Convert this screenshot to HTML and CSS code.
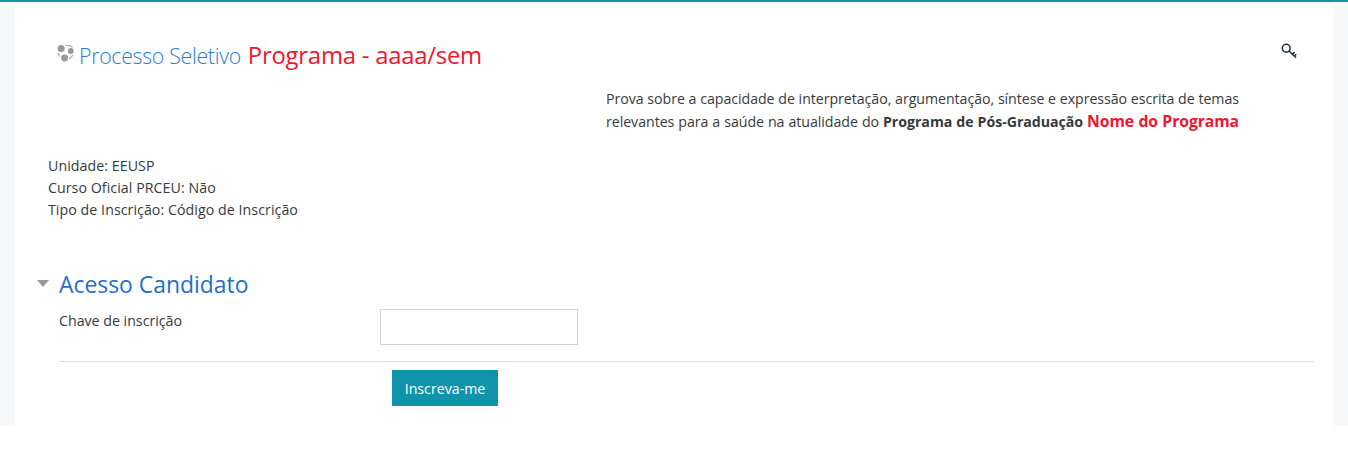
FILE: index.html
```html
<!DOCTYPE html>
<html lang="pt">
<head>
<meta charset="utf-8">
<title>Processo Seletivo</title>
<link rel="stylesheet" href="styles.css">
</head>
<body>
<div class="band">
  <main class="card">
    <header class="head">
      <h2 class="title">
        <svg class="logo" viewBox="0 0 18 18" aria-hidden="true"><circle cx="4.2" cy="4.4" r="3.5"/><circle cx="13.8" cy="7" r="2.9"/><circle cx="7.6" cy="14" r="3.4"/><path class="arc" d="M8.5 1.6 A8 8 0 0 1 15.5 3.4 M1.2 9 A8 8 0 0 0 3 12.4 M12 14.6 A7.5 7.5 0 0 0 15.8 11"/></svg>
        <span class="blue">Processo Seletivo</span>
        <span class="red">Programa - aaaa/sem</span>
      </h2>
      <svg class="key" viewBox="0 0 16 16" aria-hidden="true"><circle cx="5.2" cy="5.2" r="3.9"/><path d="M8 8 L15 14.6 M11.4 11.2 L13.6 9.2 M13.4 13 L15.2 11.2"/></svg>
    </header>
    <p class="summary">Prova sobre a capacidade de interpretação, argumentação, síntese e expressão escrita de temas relevantes para a saúde na atualidade do <b>Programa de Pós-Graduação</b> <b class="prog">Nome do Programa</b></p>
    <ul class="meta">
      <li>Unidade: EEUSP</li>
      <li>Curso Oficial PRCEU: Não</li>
      <li>Tipo de Inscrição: Código de Inscrição</li>
    </ul>
    <form class="form">
      <h3 class="legend"><span class="caret"></span>Acesso Candidato</h3>
      <div class="row">
        <label class="lbl" for="k">Chave de inscrição</label>
        <input class="inp" id="k" type="text">
      </div>
      <div class="actions"><button class="btn" type="button">Inscreva-me</button></div>
    </form>
  </main>
</div>
</body>
</html>
```

FILE: styles.css
```css
* { box-sizing: border-box; }
html, body { margin: 0; background: #fff; }
body { font-family: "Open Sans", sans-serif; font-size: 14.2px; color: #373a3c; }
.band { height: 426px; background: #f7f8fa; border-top: 2px solid #1094ab; padding: 0 14px 0 15px; }
.card { height: 424px; background: #fff; padding: 0 20px 0 33px; box-shadow: inset 0 5px 4px -3px #f3f3f3; }
.head { display: flex; justify-content: space-between; padding: 38px 17px 0 9px; height: 76px; }
.title { margin: 0; display: flex; align-items: center; height: 30px; font-weight: 400; gap: 7px; }
.logo { width: 18px; height: 18px; margin-right: -3px; margin-top: -5px; fill: #999; }
.arc { fill: none; stroke: #aaa; stroke-width: 1.2; }
.blue { color: #2a7bd6; font-weight: 300; font-size: 21.3px; letter-spacing: -0.3px; }
.red { color: #f0162f; font-size: 23.8px; letter-spacing: -0.2px; }
.key { width: 16px; height: 16px; margin-top: 3px; fill: none; stroke: #22304a; stroke-width: 1.6; }
.summary { margin: 10px 75px 0 558px; line-height: 22px; letter-spacing: -0.05px; text-align: justify; text-align-last: justify; }
.prog { color: #f0162f; font-size: 15.7px; }
.meta { list-style: none; margin: 22px 0 0; padding: 0; line-height: 22px; letter-spacing: 0.06px; }
.form { margin-top: 47px; }
.legend { margin: 0 0 0 -11px; display: flex; align-items: center; font-weight: 400; font-size: 22.9px; line-height: 34px; color: #1f6fc9; }
.caret { width: 0; height: 0; border: 6.5px solid transparent; border-top: 7px solid #999; border-bottom: 0; margin-right: 10px; margin-top: -4px; }
.row { display: flex; margin: 7px 0 0 11px; padding-bottom: 16px; border-bottom: 1px solid #dee2e6; }
.lbl { width: 321px; line-height: 24px; }
.inp { width: 198px; height: 36px; border: 1px solid #ced4da; background: #fff; }
.actions { padding: 8px 0 0 344px; }
.btn { width: 106px; height: 36px; border: 0; background: #1094ab; color: #fff; font: inherit; padding: 0; }
```
